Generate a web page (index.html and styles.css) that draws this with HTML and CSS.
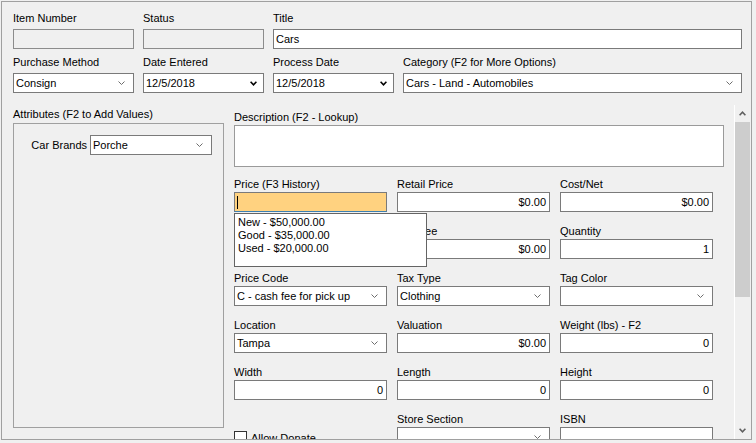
FILE: index.html
```html
<!DOCTYPE html>
<html>
<head>
<meta charset="utf-8">
<link rel="stylesheet" href="styles.css">
</head>
<body>
<div class="frame">
  <div class="top">
    <div class="field"><div class="lbl">Item Number</div><div class="box disabled"></div></div>
    <div class="field"><div class="lbl">Status</div><div class="box disabled"></div></div>
    <div class="field span2"><div class="lbl">Title</div><div class="box">Cars</div></div>

    <div class="field"><div class="lbl">Purchase Method</div>
      <div class="box combo"><span>Consign</span><svg class="chev" width="7" height="4" viewBox="0 0 7 4"><polyline points="0.5,0.5 3.5,3.5 6.5,0.5" fill="none" stroke="#6d6d6d" stroke-width="1"/></svg></div></div>
    <div class="field"><div class="lbl">Date Entered</div>
      <div class="box combo date"><span>12/5/2018</span><svg class="chev" width="7" height="5" viewBox="0 0 7 5"><polyline points="0.6,0.8 3.5,3.8 6.4,0.8" fill="none" stroke="#000" stroke-width="1.6"/></svg></div></div>
    <div class="field"><div class="lbl">Process Date</div>
      <div class="box combo date"><span>12/5/2018</span><svg class="chev" width="7" height="5" viewBox="0 0 7 5"><polyline points="0.6,0.8 3.5,3.8 6.4,0.8" fill="none" stroke="#000" stroke-width="1.6"/></svg></div></div>
    <div class="field"><div class="lbl">Category (F2 for More Options)</div>
      <div class="box combo"><span>Cars - Land - Automobiles</span><svg class="chev" width="7" height="4" viewBox="0 0 7 4"><polyline points="0.5,0.5 3.5,3.5 6.5,0.5" fill="none" stroke="#6d6d6d" stroke-width="1"/></svg></div></div>
  </div>

  <div class="lower">
    <div class="attrs">
      <div class="lbl attrs-lbl">Attributes (F2 to Add Values)</div>
      <div class="attrs-box">
        <div class="attr-row">
          <span class="attr-name">Car Brands</span>
          <div class="box combo attr-sel"><span>Porche</span><svg class="chev" width="7" height="4" viewBox="0 0 7 4"><polyline points="0.5,0.5 3.5,3.5 6.5,0.5" fill="none" stroke="#6d6d6d" stroke-width="1"/></svg></div>
        </div>
      </div>
    </div>

    <div class="scrollpanel">
      <div class="content">
        <div class="lbl desc-lbl">Description (F2 - Lookup)</div>
        <div class="desc"></div>

        <div class="pgrid">
          <div class="cell"><div class="lbl">Price (F3 History)</div><div class="box focus"><span class="caret"></span></div></div>
          <div class="cell"><div class="lbl">Retail Price</div><div class="box num">$0.00</div></div>
          <div class="cell"><div class="lbl">Cost/Net</div><div class="box num">$0.00</div></div>

          <div class="cell"></div>
          <div class="cell"><div class="lbl">Flat Fee</div><div class="box num">$0.00</div></div>
          <div class="cell"><div class="lbl">Quantity</div><div class="box num">1</div></div>

          <div class="cell"><div class="lbl">Price Code</div><div class="box combo"><span>C - cash fee for pick up</span><svg class="chev" width="7" height="4" viewBox="0 0 7 4"><polyline points="0.5,0.5 3.5,3.5 6.5,0.5" fill="none" stroke="#6d6d6d" stroke-width="1"/></svg></div></div>
          <div class="cell"><div class="lbl">Tax Type</div><div class="box combo"><span>Clothing</span><svg class="chev" width="7" height="4" viewBox="0 0 7 4"><polyline points="0.5,0.5 3.5,3.5 6.5,0.5" fill="none" stroke="#6d6d6d" stroke-width="1"/></svg></div></div>
          <div class="cell"><div class="lbl">Tag Color</div><div class="box combo"><span></span><svg class="chev" width="7" height="4" viewBox="0 0 7 4"><polyline points="0.5,0.5 3.5,3.5 6.5,0.5" fill="none" stroke="#6d6d6d" stroke-width="1"/></svg></div></div>

          <div class="cell"><div class="lbl">Location</div><div class="box combo"><span>Tampa</span><svg class="chev" width="7" height="4" viewBox="0 0 7 4"><polyline points="0.5,0.5 3.5,3.5 6.5,0.5" fill="none" stroke="#6d6d6d" stroke-width="1"/></svg></div></div>
          <div class="cell"><div class="lbl">Valuation</div><div class="box num">$0.00</div></div>
          <div class="cell"><div class="lbl">Weight (lbs) - F2</div><div class="box num">0</div></div>

          <div class="cell"><div class="lbl">Width</div><div class="box num">0</div></div>
          <div class="cell"><div class="lbl">Length</div><div class="box num">0</div></div>
          <div class="cell"><div class="lbl">Height</div><div class="box num">0</div></div>

          <div class="cell"><div class="check"><span class="cbox"></span><span>Allow Donate</span></div></div>
          <div class="cell"><div class="lbl">Store Section</div><div class="box combo"><span></span><svg class="chev" width="7" height="4" viewBox="0 0 7 4"><polyline points="0.5,0.5 3.5,3.5 6.5,0.5" fill="none" stroke="#6d6d6d" stroke-width="1"/></svg></div></div>
          <div class="cell"><div class="lbl">ISBN</div><div class="box"></div></div>

          <div class="popup">
            <div class="item">New - $50,000.00</div>
            <div class="item">Good - $35,000.00</div>
            <div class="item">Used - $20,000.00</div>
          </div>
        </div>
      </div>

      <div class="scrollbar">
        <div class="sb-btn"><svg width="7" height="5" viewBox="0 0 7 5"><polyline points="0.6,4.2 3.5,1.2 6.4,4.2" fill="none" stroke="#606060" stroke-width="1.6"/></svg></div>
        <div class="sb-thumb"></div>
        <div class="sb-fill"></div>
        <div class="sb-btn"><svg width="7" height="5" viewBox="0 0 7 5"><polyline points="0.6,0.8 3.5,3.8 6.4,0.8" fill="none" stroke="#606060" stroke-width="1.6"/></svg></div>
      </div>
    </div>
  </div>
</div>
</body>
</html>
```

FILE: styles.css
```css
* { box-sizing: border-box; }
html, body { margin: 0; padding: 0; }
body {
  background: #f0f0f0;
  font-family: "Liberation Sans", Arial, sans-serif;
  font-size: 11px;
  color: #000;
  width: 756px;
  height: 443px;
  overflow: hidden;
}
.frame {
  margin: 1px 0 0 1px;
  width: 751px;
  height: 439px;
  border: 1px solid #a0a0a0;
  display: flex;
  flex-direction: column;
  overflow: hidden;
}
.top {
  display: grid;
  grid-template-columns: 121px 121px 121px 339px;
  column-gap: 9px;
  row-gap: 7px;
  padding: 10px 0 0 11px;
}
.span2 { grid-column: span 2; }
.lbl {
  height: 13px;
  line-height: 13px;
  margin-bottom: 4px;
  white-space: nowrap;
}
.box {
  height: 20px;
  border: 1px solid #7a7a7a;
  background: #fff;
  line-height: 18px;
  padding: 0 2px;
  white-space: nowrap;
  overflow: hidden;
}
.box.disabled { background: #f0f0f0; border-color: #8c8c8c; }
.combo {
  display: flex;
  align-items: center;
  justify-content: space-between;
  padding: 0 8px 0 2px;
}
.combo.date { padding-right: 6px; }
.chev { flex: none; display: block; }
.num { text-align: right; padding-right: 3px; }

.lower {
  display: flex;
  margin-top: 12px;
  height: 334px;
}
.attrs {
  width: 222px;
  flex: none;
  padding: 3px 0 0 11px;
}
.attrs .attrs-lbl { margin-bottom: 2px; }
.attrs-box {
  width: 211px;
  height: 305px;
  border: 1px solid #a0a0a0;
  padding: 11px 11px 0 0;
}
.attr-row {
  display: flex;
  justify-content: flex-end;
  align-items: center;
}
.attr-name { margin-right: 3px; white-space: nowrap; }
.attr-sel { width: 122px; }

.scrollpanel {
  flex: 1;
  display: flex;
  min-width: 0;
}
.content {
  flex: 1;
  min-width: 0;
  padding: 6px 0 0 10px;
  overflow: hidden;
}
.content .desc-lbl { margin-bottom: 1px; }
.desc {
  width: 490px;
  height: 42px;
  border: 1px solid #9a9a9a;
  background: #fff;
  margin-bottom: 11px;
}
.pgrid {
  position: relative;
  display: grid;
  grid-template-columns: repeat(3, 153px);
  column-gap: 10px;
  row-gap: 13px;
}
.pgrid .lbl { margin-bottom: 1px; }
.box.focus {
  background: #ffd280;
  border-color: #7a7a7a;
  border-bottom-color: #3c7fb1;
  position: relative;
}
.caret {
  position: absolute;
  left: 2px;
  top: 3px;
  width: 1px;
  height: 13px;
  background: #000;
}
.check {
  display: flex;
  align-items: center;
  margin-top: 18px;
  height: 13px;
  white-space: nowrap;
}
.cbox {
  width: 13px;
  height: 13px;
  border: 1px solid #333;
  background: #fff;
  margin-right: 4px;
  flex: none;
}
.popup {
  position: absolute;
  left: 0;
  top: 35px;
  width: 193px;
  height: 54px;
  border: 1px solid #646464;
  background: #fff;
  padding: 2px 3px;
}
.item { line-height: 13px; white-space: nowrap; }

.scrollbar {
  width: 17px;
  flex: none;
  border-left: 1px solid #fff;
  background: #f0f0f0;
  display: flex;
  flex-direction: column;
}
.sb-btn {
  height: 17px;
  display: flex;
  align-items: center;
  justify-content: center;
  padding-right: 1px;
}
.sb-thumb {
  height: 175px;
  width: 15px;
  background: #cdcdcd;
}
.sb-fill { flex: 1; }
```
